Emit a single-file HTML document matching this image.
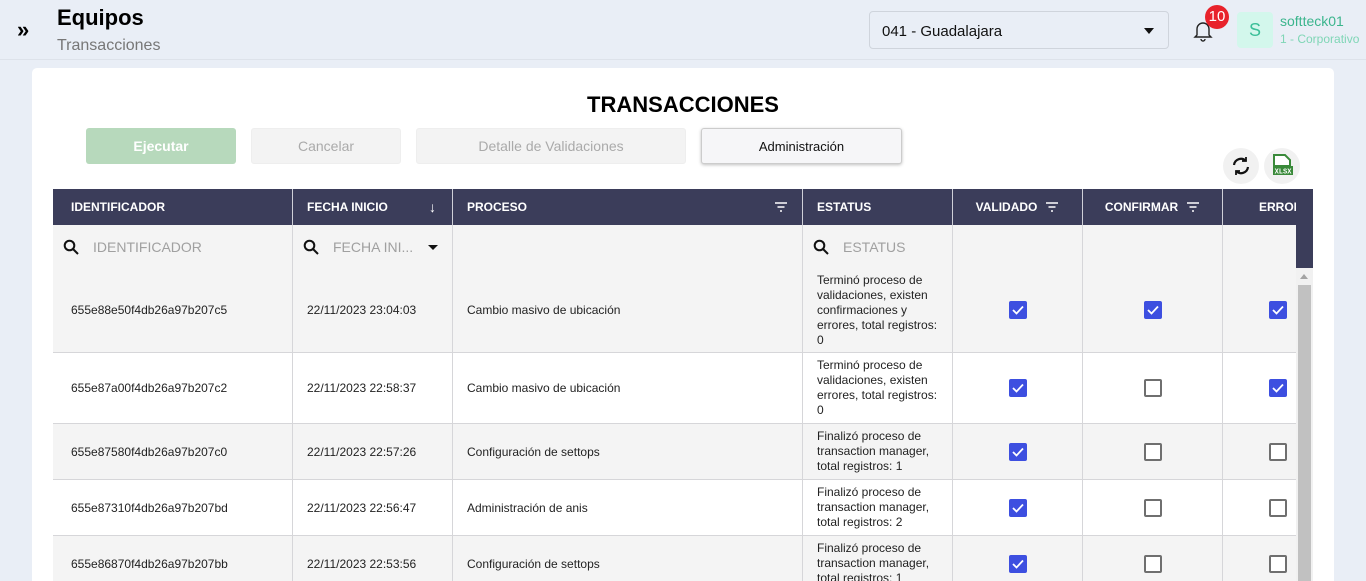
<!DOCTYPE html>
<html><head><meta charset="utf-8"><style>
*{box-sizing:border-box;margin:0;padding:0}
html,body{width:1366px;height:581px;overflow:hidden}
body{background:#e9eef6;font-family:"Liberation Sans",sans-serif;position:relative}
.a{position:absolute}
.btn{position:absolute;top:128px;height:36px;border-radius:3px;font-size:14px;font-weight:bold;display:flex;align-items:center;justify-content:center}
.tbl{position:absolute;left:53px;top:189px;width:1260px;height:400px;overflow:hidden}
.hd{position:absolute;top:0;height:36px;background:#3b3d5a;color:#fff;font-size:12px;font-weight:bold;display:flex;align-items:center;border-right:1px solid #cfd0d8}
.cell{position:absolute;border-right:1px solid #d6d6d9;border-bottom:1px solid #d6d6d9;font-size:12px;color:#222;display:flex;align-items:center}
.cb{width:18px;height:18px;border-radius:2px;background:#3d4fe0;display:flex;align-items:center;justify-content:center}
.cbo{width:18px;height:18px;border-radius:2px;border:2px solid #6f6f6f;background:#fff}
.ph{color:#a0a0a0;font-size:14px}
.mg{margin-right:14px}
</style></head><body>
<div class="a" style="left:17px;top:17px;font-size:22px;font-weight:bold">»</div>
<div class="a" style="left:57px;top:5px;font-size:22px;font-weight:bold;color:#000">Equipos</div>
<div class="a" style="left:57px;top:37px;font-size:16px;color:#777">Transacciones</div>
<div class="a" style="left:0;top:59px;width:1366px;height:1px;background:#dde2ea"></div>
<div class="a" style="left:869px;top:11px;width:300px;height:38px;border:1px solid #cfd4dc;border-radius:4px;font-size:15px;padding:11px 0 0 12px;color:#111">041 - Guadalajara<span class="a" style="right:14px;top:16px;border-left:5px solid transparent;border-right:5px solid transparent;border-top:6px solid #111"></span></div>
<svg class="a" style="left:1191px;top:18px" width="24" height="24" viewBox="0 0 24 24" fill="none" stroke="#222" stroke-width="1.4"><path d="M6 17V11a6 6 0 0 1 12 0v6l2 2H4z"/><path d="M10 21a2 2 0 0 0 4 0"/></svg>
<div class="a" style="left:1205px;top:5px;width:24px;height:24px;border-radius:12px;background:#e8222b;color:#fff;font-size:15px;text-align:center;line-height:24px">10</div>
<div class="a" style="left:1237px;top:12px;width:36px;height:36px;border-radius:4px;background:#d3f7ec;color:#3bbf98;font-size:18px;text-align:center;line-height:36px">S</div>
<div class="a" style="left:1280px;top:13px;font-size:14px;color:#3bb58d">softteck01</div>
<div class="a" style="left:1280px;top:32px;font-size:12px;color:#7fd6b6">1 - Corporativo</div>
<div class="a" style="left:32px;top:68px;width:1302px;height:540px;background:#fff;border-radius:5px"></div>
<div class="a" style="left:0;width:1366px;top:92px;text-align:center;font-size:22px;font-weight:bold;color:#000">TRANSACCIONES</div>
<div class="btn" style="left:86px;width:150px;background:#b7d9bc;color:#fff">Ejecutar</div>
<div class="btn" style="left:251px;width:150px;background:#f3f3f3;color:#aaa;border:1px solid #eee;font-weight:normal">Cancelar</div>
<div class="btn" style="left:416px;width:270px;background:#f3f3f3;color:#aaa;border:1px solid #eee;font-weight:normal">Detalle de Validaciones</div>
<div class="btn" style="left:701px;width:201px;background:#f6f6f8;color:#111;border:1px solid #ccc;box-shadow:0 1px 3px rgba(0,0,0,.25);font-weight:normal;font-size:13px">Administración</div>
<div class="a" style="left:1223px;top:148px;width:36px;height:36px;border-radius:18px;background:#f1f1f1"></div>
<svg class="a" style="left:1229px;top:154px" width="24" height="24" viewBox="0 0 24 24" fill="none" stroke="#111" stroke-width="2.2"><path d="M5 11a7 7 0 0 1 12-4"/><path d="M19 13a7 7 0 0 1-12 4"/><path d="M17 3v4h-4M7 21v-4h4" stroke-width="1.8"/></svg>
<div class="a" style="left:1264px;top:148px;width:36px;height:36px;border-radius:18px;background:#f1f1f1"></div>
<svg class="a" style="left:1272px;top:154px" width="22" height="24" viewBox="0 0 22 24"><path d="M2 1h11l5 5v6H2z" fill="#fff" stroke="#3a8a3a" stroke-width="2"/><rect x="1" y="12" width="20" height="9" fill="#3a8a3a"/><text x="11" y="19.5" font-size="7" font-family="Liberation Mono" fill="#fff" text-anchor="middle" font-weight="bold">XLSX</text></svg>

<div class="tbl">
<div class="hd" style="left:0;width:240px;padding-left:18px">IDENTIFICADOR</div>
<div class="hd" style="left:240px;width:160px;padding-left:14px">FECHA INICIO<span class="a" style="right:16px;font-size:14px">↓</span></div>
<div class="hd" style="left:400px;width:350px;padding-left:14px">PROCESO<svg class="a" style="right:14px" width="14" height="10" viewBox="0 0 14 10" stroke="#fff" stroke-width="1.6"><path d="M1 1h12M3.5 5h7M6 9h2"/></svg></div>
<div class="hd" style="left:750px;width:150px;padding-left:14px">ESTATUS</div>
<div class="hd" style="left:900px;width:130px;justify-content:center">VALIDADO<svg style="margin-left:8px" width="14" height="10" viewBox="0 0 14 10" stroke="#fff" stroke-width="1.6"><path d="M1 1h12M3.5 5h7M6 9h2"/></svg></div>
<div class="hd" style="left:1030px;width:140px;justify-content:center">CONFIRMAR<svg style="margin-left:8px" width="14" height="10" viewBox="0 0 14 10" stroke="#fff" stroke-width="1.6"><path d="M1 1h12M3.5 5h7M6 9h2"/></svg></div>
<div class="hd" style="left:1170px;width:90px;padding-left:36px;border-right:none">ERROR</div>
<div class="a" style="left:1243px;top:0;width:17px;height:79px;background:#3b3d5a"></div>
<div class="a" style="left:1243px;top:0;width:17px;height:36px;background:#3b3d5a;overflow:hidden"></div>

<div class="cell" style="left:0;top:36px;width:240px;height:43px;background:#f4f4f4;padding-left:10px;border-bottom:none"><svg class="mg" width="16" height="16" viewBox="0 0 16 16" fill="none" stroke="#111" stroke-width="2"><circle cx="6.5" cy="6.5" r="4.8"/><path d="M10 10l5 5"/></svg><span class="ph">IDENTIFICADOR</span></div>
<div class="cell" style="left:240px;top:36px;width:160px;height:43px;background:#f4f4f4;padding-left:10px;border-bottom:none"><svg class="mg" width="16" height="16" viewBox="0 0 16 16" fill="none" stroke="#111" stroke-width="2"><circle cx="6.5" cy="6.5" r="4.8"/><path d="M10 10l5 5"/></svg><span class="ph">FECHA INI...</span><span class="a" style="left:135px;top:20px;border-left:5px solid transparent;border-right:5px solid transparent;border-top:5px solid #111"></span></div>
<div class="cell" style="left:400px;top:36px;width:350px;height:43px;background:#f4f4f4;border-bottom:none"></div>
<div class="cell" style="left:750px;top:36px;width:150px;height:43px;background:#f4f4f4;padding-left:10px;border-bottom:none"><svg class="mg" width="16" height="16" viewBox="0 0 16 16" fill="none" stroke="#111" stroke-width="2"><circle cx="6.5" cy="6.5" r="4.8"/><path d="M10 10l5 5"/></svg><span class="ph">ESTATUS</span></div>
<div class="cell" style="left:900px;top:36px;width:130px;height:43px;background:#f4f4f4;border-bottom:none"></div>
<div class="cell" style="left:1030px;top:36px;width:140px;height:43px;background:#f4f4f4;border-bottom:none"></div>
<div class="cell" style="left:1170px;top:36px;width:73px;height:43px;background:#f4f4f4;border-bottom:none;border-right:none"></div>

<div id="rows"></div>
<div class="a" style="left:1243px;top:79px;width:17px;height:330px;background:#f1f1f1"></div>
<div class="a" style="left:1245px;top:96px;width:13px;height:310px;background:#c1c1c1"></div>
<div class="a" style="left:1247px;top:85px;border-left:4px solid transparent;border-right:4px solid transparent;border-bottom:5px solid #a3a3a3"></div>
</div>
<script>
var R=[[79,85,"#f4f4f4","655e88e50f4db26a97b207c5","22/11/2023 23:04:03","Cambio masivo de ubicación","Terminó proceso de validaciones, existen confirmaciones y errores, total registros: 0",1,1,1],
[164,71,"#fff","655e87a00f4db26a97b207c2","22/11/2023 22:58:37","Cambio masivo de ubicación","Terminó proceso de validaciones, existen errores, total registros: 0",1,0,1],
[235,56,"#f4f4f4","655e87580f4db26a97b207c0","22/11/2023 22:57:26","Configuración de settops","Finalizó proceso de transaction manager, total registros: 1",1,0,0],
[291,56,"#fff","655e87310f4db26a97b207bd","22/11/2023 22:56:47","Administración de anis","Finalizó proceso de transaction manager, total registros: 2",1,0,0],
[347,56,"#f4f4f4","655e86870f4db26a97b207bb","22/11/2023 22:53:56","Configuración de settops","Finalizó proceso de transaction manager, total registros: 1",1,0,0]];
var ck='<div class="cb"><svg width="12" height="10" viewBox="0 0 12 10"><path d="M1 5l3.5 3.5L11 1.5" fill="none" stroke="#fff" stroke-width="1.8"/></svg></div>',un='<div class="cbo"></div>';
var h='';R.forEach(function(r){var t=r[0],hh=r[1],b=r[2];function c(l,w,inner,st){h+='<div class="cell" style="left:'+l+'px;top:'+t+'px;width:'+w+'px;height:'+hh+'px;background:'+b+';'+(st||'')+'">'+inner+'</div>'}
c(0,240,r[3],'padding-left:18px');c(240,160,r[4],'padding-left:14px');c(400,350,r[5],'padding-left:14px');c(750,150,'<span style="line-height:15px">'+r[6]+'</span>','padding:0 10px 0 14px');
c(900,130,r[7]?ck:un,'justify-content:center');c(1030,140,r[8]?ck:un,'justify-content:center');c(1170,73,r[9]?ck:un,'padding-left:46px;border-right:none');});
document.getElementById('rows').outerHTML=h;
</script>
</body></html>
